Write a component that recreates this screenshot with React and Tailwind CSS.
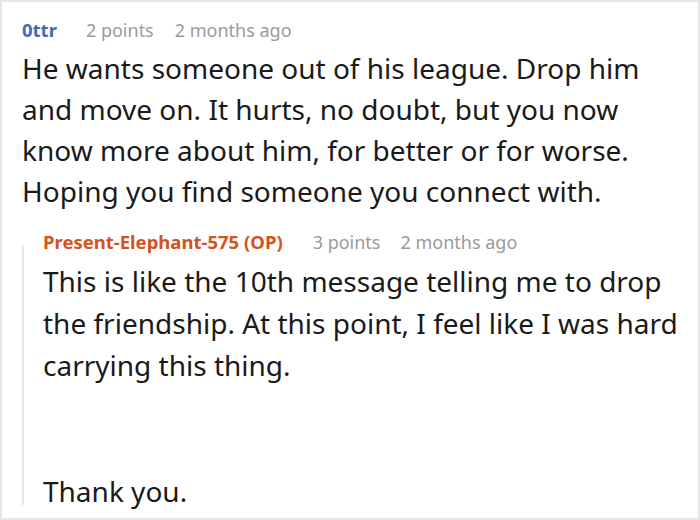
export default function App() {
  return (
    <div className="w-[700px] h-[520px] bg-white border-2 border-[#e6e6e6] overflow-hidden" style={{ fontFamily: '"Noto Sans", sans-serif' }}>
      <div className="pl-[20px] pt-[16px]">
        <div className="flex items-baseline text-[18px] leading-[24px]">
          <span className="font-bold text-[18.5px] text-[#3b6cb7] mr-[29px]">0ttr</span>
          <span className="text-[#9a9a9a] mr-[21px]">2 points</span>
          <span className="text-[#9a9a9a]">2 months ago</span>
        </div>
        <p className="text-[28px] leading-[41px] text-[#1a1a1a] mt-[6px] w-[650px]">
          He wants someone out of his league. Drop him and move on. It hurts, no doubt, but you now know more about him, for better or for worse. Hoping you find someone you connect with.
        </p>
        <div className="flex mt-[18px]">
          <div className="w-[2px] bg-[#e6e6e6] mt-[15px] mb-[7px] shrink-0" />
          <div className="pl-[19px]">
            <div className="flex items-baseline text-[18px] leading-[24px]">
              <span className="font-bold text-[18.5px] text-[#d4531c] mr-[30px]">Present-Elephant-575 (OP)</span>
              <span className="text-[#9a9a9a] mr-[20px]">3 points</span>
              <span className="text-[#9a9a9a]">2 months ago</span>
            </div>
            <p className="text-[28px] leading-[42px] text-[#1a1a1a] mt-[6px] w-[650px]">
              This is like the 10th message telling me to drop the friendship. At this point, I feel like I was hard carrying this thing.
            </p>
            <p className="text-[28px] leading-[42px] text-[#1a1a1a] mt-[84px]">Thank you.</p>
          </div>
        </div>
      </div>
    </div>
  );
}
